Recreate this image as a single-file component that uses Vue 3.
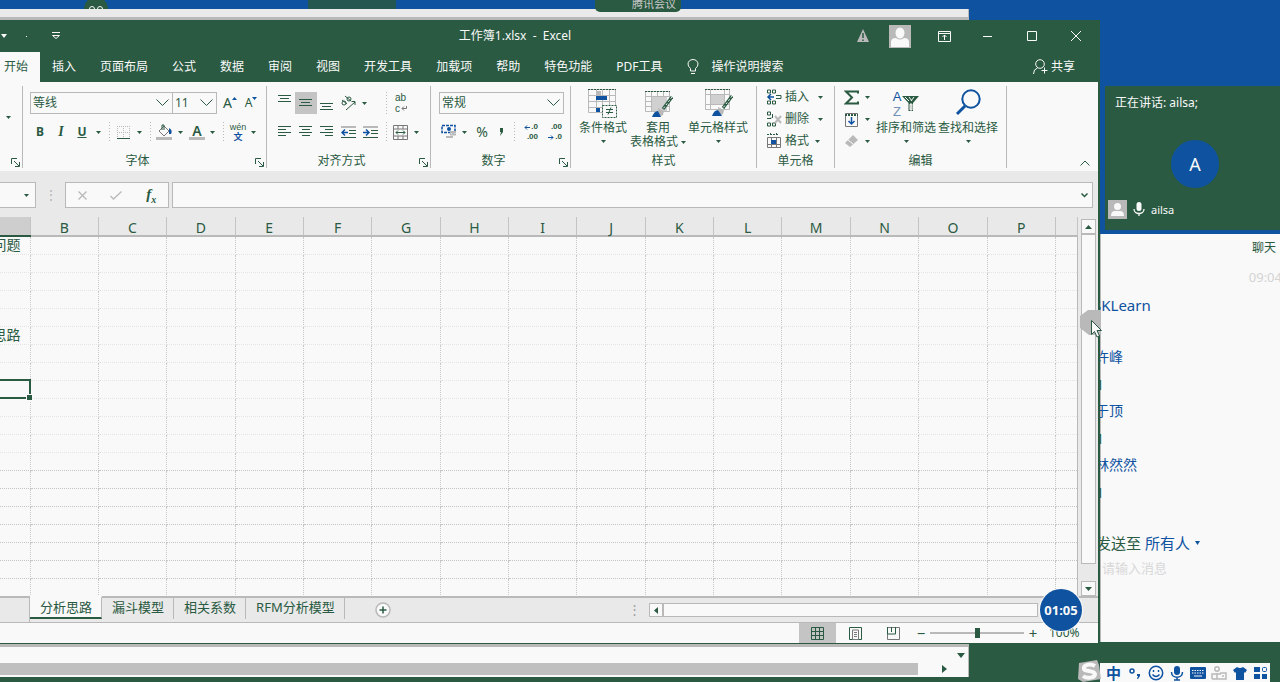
<script setup>
const tabs = ['开始', '插入', '页面布局', '公式', '数据', '审阅', '视图', '开发工具', '加载项', '帮助', '特色功能', 'PDF工具']
const columns = 'BCDEFGHIJKLMNOP'.split('')
const firstColumn = { 1: '主要问题', 6: '分析思路' }
const selectedRow = 9
const rowCount = 20
const sheets = ['分析思路', '漏斗模型', '相关系数', 'RFM分析模型']
const messages = [
  { name: 'SKLearn', text: '' },
  { name: '许峰', text: '1' },
  { name: '于顶', text: '1' },
  { name: '林然然', text: '1' }
]
</script>

<template>
  <div class="desktop">
    <div class="shade"></div>
    <div class="wall-dot"><i></i><i></i></div>
    <div class="meeting-tab">腾讯会议</div>

    <section class="back-window" aria-label="后台窗口">
      <div class="back-bottom">
        <div class="back-line"><svg width="8" height="5"><path d="M0 0h8L4 5z" fill="#2a5a42" /></svg></div>
        <div class="back-scroll">
          <div class="back-thumb"></div>
          <svg width="5" height="8"><path d="M0 0v8l5-4z" fill="#2a5a42" /></svg>
        </div>
      </div>
    </section>

    <footer class="taskbar">
      <div class="ime">
        <svg class="sogou" width="26" height="22" viewBox="0 0 26 22"><path d="M3 3L21 0l2 5 2 14-18 3-5-3z" fill="#b9b9b9" /><path d="M19 6C14 3 7 5 8 9c1 3 10 1 11 5 0 4-8 5-12 2" fill="none" stroke="#f9f9f9" stroke-width="4" /></svg>
        <button class="zh" aria-label="中文">中</button>
        <button aria-label="标点"><svg width="14" height="14"><circle cx="4" cy="5" r="2" fill="none" stroke="#0e52a0" stroke-width="1.5" /><path d="M9 8h3v2l-2 3H9l1-3H9z" fill="#0e52a0" /></svg></button>
        <button aria-label="表情"><svg width="16" height="16"><circle cx="8" cy="8" r="6.7" fill="none" stroke="#0e52a0" stroke-width="1.5" /><path d="M5.500 5v2M10.500 5v2M4.500 9.500q3.500 4 7 0" fill="none" stroke="#0e52a0" stroke-width="1.400" /></svg></button>
        <button aria-label="语音"><svg width="14" height="16"><rect x="4" y="1" width="6" height="9" rx="3" fill="#0e52a0" /><path d="M1.500 7c0 7 11 7 11 0M7 12v3M4 15h6" fill="none" stroke="#0e52a0" stroke-width="1.500" /></svg></button>
        <button aria-label="键盘"><svg width="16" height="12"><rect width="16" height="12" rx="1" fill="#0e52a0" /><path d="M2 3.500h12M2 6h12" stroke="#f9f9f9" stroke-dasharray="1.500 1" /><path d="M4 9h8" stroke="#f9f9f9" /></svg></button>
        <button aria-label="账户"><svg width="16" height="16" fill="none" stroke="#b9b9b9" stroke-width="1.500"><circle cx="6" cy="4" r="2.200" /><path d="M1 14V9h9M6 8v6M9 8h6v6H1M11 11h2" /></svg></button>
        <button aria-label="皮肤"><svg width="14" height="14"><path d="M4 1q3 2 6 0l4 3-2 3-1-1v8H3V6L2 7 0 4z" fill="#0e52a0" /></svg></button>
        <button aria-label="工具箱"><svg width="14" height="14"><path d="M0 1h6v5H0zM0 8h6v5H0zM8 8h5v5H8z" fill="#0e52a0" /><rect x="8.500" y="1.500" width="4" height="4" rx="1" fill="none" stroke="#0e52a0" /></svg></button>
      </div>
    </footer>

    <section class="speaker" aria-label="会议">
      <p>正在讲话: ailsa;</p>
      <div class="big-avatar">A</div>
      <div class="person">
        <svg width="19" height="19"><rect width="19" height="19" fill="#b9b9b9" /><circle cx="9.500" cy="6.500" r="3.500" fill="#f9f9f9" /><path d="M3 16q0-5 4-5h5q4 0 4 5z" fill="#f9f9f9" /></svg>
        <svg width="12" height="15"><rect x="3.500" y="0" width="5" height="9" rx="2.500" fill="#f9f9f9" /><path d="M1 7c0 6 10 6 10 0M6 11v3" fill="none" stroke="#f9f9f9" stroke-width="1.300" /></svg>
        <span>ailsa</span>
      </div>
    </section>

    <section class="chat" aria-label="聊天">
      <h2>聊天</h2>
      <time>09:04</time>
      <ul>
        <li v-for="m in messages" :key="m.name"><b>{{ m.name }}</b><span v-if="m.text">{{ m.text }}</span></li>
      </ul>
      <div class="send">
        <span>发送至</span>
        <button>所有人<svg width="5" height="4"><path d="M0 0h5L2.500 4z" fill="#0e52a0" /></svg></button>
      </div>
      <textarea aria-label="消息" placeholder="请输入消息"></textarea>
    </section>

    <main class="excel">
      <header class="titlebar">
        <div class="quick">
          <button aria-label="撤消选项"><svg width="6" height="4"><path d="M0 0h6L3 4z" fill="#f9f9f9" /></svg></button>
          <i></i>
          <button aria-label="自定义快速访问工具栏"><svg width="8" height="8"><path d="M0 .5h8" stroke="#f9f9f9" /><path d="M.5 3.500h7L4 6.500z" fill="none" stroke="#f9f9f9" /></svg></button>
        </div>
        <h1>工作簿1.xlsx&nbsp; -&nbsp; Excel</h1>
        <div class="controls">
          <button class="warn" aria-label="警告"><svg width="14" height="14"><path d="M7 0l6 13H1z" fill="#b9b9b9" /><path d="M7 4v5M7 10.500v1.500" stroke="#2a5a42" stroke-width="1.500" /></svg></button>
          <button aria-label="账户"><svg width="22" height="23"><rect width="22" height="23" fill="#b9b9b9" /><ellipse cx="11" cy="8" rx="4.500" ry="5.500" fill="#f9f9f9" /><path d="M2 22v-5q0-4 5-4 4 3 8 0 5 0 5 4v5z" fill="#f9f9f9" /></svg></button>
          <button aria-label="功能区显示选项"><svg width="13" height="11" fill="none" stroke="#f9f9f9"><path d="M.5.500h12v10H.5zM.5 2.500h12M6.500 9V4M4.500 6l2-2 2 2" /></svg></button>
          <button aria-label="最小化"><svg width="10" height="10"><path d="M0 5.500h9" stroke="#f9f9f9" /></svg></button>
          <button aria-label="最大化"><svg width="10" height="10"><path d="M.5.500h9v9h-9z" fill="none" stroke="#f9f9f9" /></svg></button>
          <button aria-label="关闭"><svg width="10" height="10"><path d="M0 0l10 10M10 0L0 10" stroke="#f9f9f9" /></svg></button>
        </div>
      </header>

      <nav class="tabs">
        <button v-for="(t, i) in tabs" :key="t" :class="{ on: i === 0 }">{{ t }}</button>
        <button class="tell"><svg width="12" height="16" fill="none" stroke="#f9f9f9"><path d="M3.500 12V9.500Q1 7.500 1 5a5 4.500 0 0 1 10 0q0 2.500-2.500 4.500V12zM4 14.500h4" /></svg>操作说明搜索</button>
        <button class="share"><svg width="15" height="16" fill="none" stroke="#f9f9f9"><circle cx="7" cy="5" r="4.300" /><path d="M.5 15q0-5 4-6M11.500 8.500v6M8.500 11.500h6" /></svg>共享</button>
      </nav>

      <div class="ribbon">
        <div class="group g-clip">
          <div class="body"><button class="tailcaret" aria-label="粘贴选项"><svg class="caret"><path d="M0 0h5L2.500 3z" /></svg></button></div>
          <div class="foot"><span></span><button class="launch" aria-label="剪贴板设置"><svg width="9" height="9"><path d="M.5 6V.5H6M3 3l5 5M8.500 4v4.500H4" /></svg></button></div>
        </div>

        <div class="group g-font">
          <div class="body rows">
            <div class="row first">
              <div class="pick font-name"><select aria-label="字体"><option>等线</option></select><svg width="13" height="8"><path d="M.5.500l6 6 6-6" /></svg></div>
              <div class="pick font-size"><select aria-label="字号"><option>11</option></select><svg width="13" height="8"><path d="M.5.500l6 6 6-6" /></svg></div>
              <button class="w22 grow" aria-label="增大字号">A<svg width="5" height="3"><path d="M0 3h5L2.500 0z" /></svg></button>
              <button class="w20 shrink" aria-label="减小字号">A<svg width="5" height="3"><path d="M0 0h5L2.500 3z" /></svg></button>
            </div>
            <div class="row">
              <button class="w20"><b>B</b></button><button class="w22"><em>I</em></button><button class="w20"><u>U</u></button>
              <button class="w12" aria-label="下划线选项"><svg class="caret"><path d="M0 0h5L2.500 3z" /></svg></button><i class="sep w10"></i>
              <button class="w18" aria-label="边框"><svg width="13" height="13"><path d="M.5 0v12M6.500 0v12M12.500 0v12M0 .5h13M0 6.500h13" stroke="#b9b9b9" stroke-dasharray="1 1" /><path d="M0 12.500h13" stroke="#2a5a42" /></svg></button>
              <button class="w14" aria-label="边框选项"><svg class="caret"><path d="M0 0h5L2.500 3z" /></svg></button><i class="sep w8"></i>
              <button class="w20" aria-label="填充颜色"><svg width="17" height="16"><path d="M3 7l5-5 5 5-5 5z" fill="#f9f9f9" stroke="#777" /><path d="M6 6V1h2v5" fill="none" stroke="#2a5a42" /><path d="M13 4q4 2 2 6h-2z" fill="#0e52a0" /><path d="M0 13h16v3H0z" fill="#b9b9b9" /></svg></button>
              <button class="w12" aria-label="填充选项"><svg class="caret"><path d="M0 0h5L2.500 3z" /></svg></button>
              <button class="w22 color-a" aria-label="字体颜色">A</button>
              <button class="w8" aria-label="颜色选项"><svg class="caret"><path d="M0 0h5L2.500 3z" /></svg></button><i class="sep w14"></i>
              <button class="w16 pinyin"><span>wén</span><span class="blue">文</span></button>
              <button class="w14" aria-label="拼音选项"><svg class="caret"><path d="M0 0h5L2.500 3z" /></svg></button>
            </div>
          </div>
          <div class="foot"><span>字体</span><button class="launch" aria-label="字体设置"><svg width="9" height="9"><path d="M.5 6V.5H6M3 3l5 5M8.500 4v4.500H4" /></svg></button></div>
        </div>

        <div class="group g-align">
          <div class="body rows">
            <div class="row first">
              <button class="w20" aria-label="顶端对齐"><svg class="ln" width="14" height="16"><path d="M0 .5h13M2 3.500h9M0 6.500h13" /></svg></button>
              <button class="w22 pressed" aria-label="垂直居中"><svg class="ln" width="14" height="16"><path d="M0 4.500h13M2 7.500h9M0 10.500h13" /></svg></button>
              <button class="w20" aria-label="底端对齐"><svg class="ln" width="14" height="16"><path d="M0 8.500h13M2 11.500h9M0 14.500h13" /></svg></button>
              <button class="w22" aria-label="方向"><svg class="ln" width="18" height="18"><circle cx="5" cy="9" r="2" /><path d="M3 6l5 4M6 2l6 5" /><circle cx="10" cy="5" r="2" /><path d="M7 16l9-8M12.500 7.500H16v3.500" /></svg></button>
              <button class="w10" aria-label="方向选项"><svg class="caret"><path d="M0 0h5L2.500 3z" /></svg></button>
              <i class="w12"></i><i class="sep w10"></i>
              <button class="w18 wrap" aria-label="自动换行"><span>ab</span><span>c<svg width="6" height="5"><path d="M5.500 0v2.500H1M3 .5l-2 2 2 2" fill="none" stroke="#777" /></svg></span></button>
            </div>
            <div class="row">
              <button class="w20" aria-label="左对齐"><svg class="ln" width="14" height="12"><path d="M0 .5h13M0 3.500h8M0 6.500h13M0 9.500h8" /></svg></button>
              <button class="w22" aria-label="居中"><svg class="ln" width="14" height="12"><path d="M0 .5h13M3 3.500h8M0 6.500h13M3 9.500h8" /></svg></button>
              <button class="w20" aria-label="右对齐"><svg class="ln" width="14" height="12"><path d="M0 .5h13M5 3.500h8M0 6.500h13M5 9.500h8" /></svg></button>
              <button class="w24" aria-label="减少缩进"><svg class="ln" width="16" height="13"><path d="M0 1h15" stroke="#b9b9b9" stroke-width="2" /><path d="M8 4.500h7M8 7.500h7M0 11.500h15" /><path d="M7 6.500H1M4 3.500l-3 3 3 3" stroke="#0e52a0" stroke-width="1.500" /></svg></button>
              <button class="w20" aria-label="增加缩进"><svg class="ln" width="16" height="13"><path d="M0 1h15" stroke="#b9b9b9" stroke-width="2" /><path d="M8 4.500h7M8 7.500h7M0 11.500h15" /><path d="M0 6.500h6M3 3.500l3 3-3 3" stroke="#0e52a0" stroke-width="1.500" /></svg></button>
              <i class="sep w10"></i>
              <button class="w18" aria-label="合并后居中"><svg class="ln" width="15" height="15"><path d="M.5.500h14v14H.5zM.5 4h14M.5 11h14M5 .5V4M10 .5V4M5 11v3.500M10 11v3.500" stroke="#777" /><path d="M3 7.500h9M5 5.500l-2 2 2 2M10 5.500l2 2-2 2" /></svg></button>
              <button class="w14" aria-label="合并选项"><svg class="caret"><path d="M0 0h5L2.500 3z" /></svg></button>
            </div>
          </div>
          <div class="foot"><span>对齐方式</span><button class="launch" aria-label="对齐设置"><svg width="9" height="9"><path d="M.5 6V.5H6M3 3l5 5M8.500 4v4.500H4" /></svg></button></div>
        </div>

        <div class="group g-num">
          <div class="body rows">
            <div class="row first"><div class="pick num-format"><select aria-label="数字格式"><option>常规</option></select><svg width="13" height="8"><path d="M.5.500l6 6 6-6" /></svg></div></div>
            <div class="row">
              <button class="w20" aria-label="会计数字格式"><svg width="16" height="16"><path d="M1 1.500h13v7H1z" fill="none" stroke="#0e52a0" stroke-width="1.500" stroke-dasharray="3 1" /><circle cx="8" cy="5" r="2" fill="#0e52a0" /><path d="M9 8h6M9 10.500h6M5 13h7" stroke="#b9b9b9" stroke-width="2" /></svg></button>
              <button class="w10" aria-label="货币选项"><svg class="caret"><path d="M0 0h5L2.500 3z" /></svg></button>
              <button class="w26 pct">%</button><button class="w12 comma" aria-label="千位分隔"><svg width="5" height="8"><path d="M1 0h3v4L1 8l1-4H1z" fill="#2a5a42" /></svg></button><i class="sep w14"></i>
              <button class="w20 dec" aria-label="增加小数位数"><span><svg width="6" height="5"><path d="M6 2.500H1M3 .5l-2 2 2 2" /></svg>.0</span><span>.00</span></button>
              <button class="w24 dec" aria-label="减少小数位数"><span>.00</span><span><svg width="6" height="5"><path d="M0 2.500h5M3 .5l2 2-2 2" /></svg>.0</span></button>
            </div>
          </div>
          <div class="foot"><span>数字</span><button class="launch" aria-label="数字设置"><svg width="9" height="9"><path d="M.5 6V.5H6M3 3l5 5M8.500 4v4.500H4" /></svg></button></div>
        </div>

        <div class="group g-style">
          <div class="body bigs">
            <button class="big w54"><svg width="30" height="30"><path d="M.5.500h27v23H.5zM.5 6.500h27M.5 12.500h27M.5 18.500h27M8.500.500v23M14.500.500v23M21.500.500v23" fill="none" stroke="#b9b9b9" /><path d="M0 .5h28" stroke="#2a5a42" stroke-dasharray="2 1" /><path d="M8 2h5v4H8z" fill="#b9b9b9" /><path d="M8 7h11v4H8zM8 19h4v4H8z" fill="#0e52a0" /><rect x="14.500" y="16.500" width="14" height="12" fill="#f9f9f9" stroke="#2a5a42" stroke-dasharray="2 1" /><path d="M18 20.500h7M18 23.500h7M23 18.500l-3 7" stroke="#2a5a42" /></svg><span>条件格式</span><svg class="caret"><path d="M0 0h5L2.500 3z" /></svg></button>
            <button class="big w56"><svg width="30" height="30"><path d="M2.500 2.500h24v20h-24zM2.500 7.500h24M2.500 12.500h24M2.500 17.500h24M8.500 2.500v20M14.500 2.500v20M20.500 2.500v20" fill="#f9f9f9" stroke="#b9b9b9" /><path d="M9 8h15v14H9z" fill="#d0d0d0" /><path d="M2 2.500h25" stroke="#2a5a42" stroke-dasharray="2 1" /><path d="M29 8l-9 12" stroke="#2a5a42" stroke-width="3" /><path d="M29 8l-9 12" stroke="#f9f9f9" stroke-dasharray="2 2" /><path d="M15 19l6 3-1 4-4 2z" fill="#b9b9b9" /><path d="M9 28q2-6 6-6l3 6z" fill="#0e52a0" /></svg><span>套用</span><span class="line2">表格格式<svg class="caret"><path d="M0 0h5L2.500 3z" /></svg></span></button>
            <button class="big w64"><svg width="30" height="30"><path d="M2.500.500h24v20h-24zM2.500 5.500h24M2.500 15.500h24M7.500.500v20M21.500.500v20" fill="#f9f9f9" stroke="#b9b9b9" /><path d="M8 6h13v9H8z" fill="#d0d0d0" /><path d="M2 .5h25" stroke="#2a5a42" stroke-dasharray="2 1" /><path d="M29 7l-9 12" stroke="#2a5a42" stroke-width="3" /><path d="M29 7l-9 12" stroke="#f9f9f9" stroke-dasharray="2 2" /><path d="M15 18l6 3-1 4-4 2z" fill="#b9b9b9" /><path d="M9 27q2-6 6-6l4 6z" fill="#0e52a0" /></svg><span>单元格样式</span><svg class="caret"><path d="M0 0h5L2.500 3z" /></svg></button>
          </div>
          <div class="foot"><span>样式</span></div>
        </div>

        <div class="group g-cell">
          <div class="body list">
            <button><svg width="16" height="16" fill="none" stroke="#2a5a42"><path d="M1.500 1v3h3V1zM6.500 1v3h3V1zM1.500 12v3h3v-3zM6.500 12v3h3v-3zM10 6.500h5v3h-5" /><path d="M8 8H2M5 5L2 8l3 3" stroke="#0e52a0" stroke-width="1.500" /></svg>插入<svg class="caret wide"><path d="M0 0h5L2.500 3z" /></svg></button>
            <button><svg width="16" height="16" fill="none" stroke="#2a5a42"><path d="M1.500 1v3h3V1zM1.500 12v3h3v-3zM6.500 12v3h3v-3zM1 7.500h4v-1M6.500 3v4" /><path d="M9 5l6 7M15 5l-6 7" stroke="#b9b9b9" stroke-width="2" /></svg>删除<svg class="caret wide"><path d="M0 0h5L2.500 3z" /></svg></button>
            <button><svg width="16" height="16" fill="none" stroke="#2a5a42"><path d="M1 1.500h12M4.500 0v3M10.500 0v3" stroke-dasharray="2 1" /><path d="M1.500 4.500h13v10h-13zM1.500 11.500h13M5.500 5v9M10.500 5v9" stroke="#777" /><path d="M5 7h5v4H5z" fill="#0e52a0" stroke="none" /></svg>格式<svg class="caret"><path d="M0 0h5L2.500 3z" /></svg></button>
          </div>
          <div class="foot"><span>单元格</span></div>
        </div>

        <div class="group g-edit">
          <div class="body edit">
            <div class="list">
              <button aria-label="自动求和"><svg width="15" height="15"><path d="M14 3.500V1.500H2L8 7.500 2 13.500h12v-2" fill="none" stroke="#2a5a42" stroke-width="2" /></svg><svg class="caret"><path d="M0 0h5L2.500 3z" /></svg></button>
              <button aria-label="填充"><svg width="15" height="15"><path d="M1.500 1.500h12v13h-12z" fill="none" stroke="#777" /><path d="M1 3h13" stroke="#2a5a42" stroke-width="2" stroke-dasharray="2 1" /><path d="M7.500 5v7M4.500 9l3 3 3-3" fill="none" stroke="#0e52a0" stroke-width="1.500" /></svg><svg class="caret"><path d="M0 0h5L2.500 3z" /></svg></button>
              <button aria-label="清除"><svg width="15" height="15"><path d="M1 9l8-8 5 5-8 7z" fill="#b9b9b9" /><path d="M4 6l5 4" stroke="#f9f9f9" /></svg><svg class="caret"><path d="M0 0h5L2.500 3z" /></svg></button>
            </div>
            <button class="big w60"><span class="az"><span class="letters"><span>A</span><span>Z</span></span><svg width="17" height="16"><path d="M0 0h17l-6 7v8H6.500V7z" fill="#2a5a42" /><path d="M8 8h2v6H8zM3 1l4 4M7 1l3 4M12 1l-3 4" stroke="#f9f9f9" fill="#b9b9b9" /></svg></span><span>排序和筛选</span><svg class="caret"><path d="M0 0h5L2.500 3z" /></svg></button>
            <button class="big w64"><svg width="28" height="30"><circle cx="17" cy="10" r="8.700" fill="none" stroke="#0e52a0" stroke-width="2" /><path d="M11 17l-8 8" stroke="#0e52a0" stroke-width="3" /></svg><span>查找和选择</span><svg class="caret"><path d="M0 0h5L2.500 3z" /></svg></button>
          </div>
          <div class="foot"><span>编辑</span></div>
        </div>
        <button class="collapse" aria-label="折叠功能区"><svg width="10" height="6"><path d="M.5 5.500l4.500-4.500 4.500 4.500" fill="none" stroke="#2a5a42" /></svg></button>
      </div>

      <div class="formula">
        <div class="namebox"><input aria-label="名称框"><svg class="caret"><path d="M0 0h5L2.500 3z" /></svg></div>
        <span class="grip">⋮</span>
        <div class="fx">
          <button aria-label="取消"><svg width="9" height="9"><path d="M.5.500l8 8M8.500.500l-8 8" stroke="#b9b9b9" stroke-width="1.300" /></svg></button>
          <button aria-label="输入"><svg width="12" height="9"><path d="M.5 5l3 3 8-7.500" fill="none" stroke="#b9b9b9" stroke-width="1.300" /></svg></button>
          <button class="fn"><em>f<sub>x</sub></em></button>
        </div>
        <div class="fbox"><input aria-label="编辑栏"><svg width="7" height="5"><path d="M.5.500l3 3 3-3" fill="none" stroke="#2a5a42" stroke-width="1.500" /></svg></div>
      </div>

      <div class="sheet">
        <table>
          <colgroup><col class="c-a"><col v-for="c in columns" :key="c"><col class="c-end"></colgroup>
          <thead><tr><th class="sel" aria-label="A"></th><th v-for="c in columns" :key="c">{{ c }}</th><th aria-label="Q"></th></tr></thead>
          <tbody>
            <tr v-for="r in rowCount" :key="r" :class="{ strong: r > 12 }">
              <td :class="{ active: r === selectedRow }"><div v-if="firstColumn[r]">{{ firstColumn[r] }}</div></td>
              <td v-for="c in columns" :key="c"></td><td></td>
            </tr>
          </tbody>
        </table>
        <div class="vscroll">
          <button aria-label="向上滚动"><svg width="7" height="4"><path d="M0 4h7L3.500 0z" fill="#2a5a42" /></svg></button>
          <div class="thumb"></div>
          <button aria-label="向下滚动"><svg width="7" height="4"><path d="M0 0h7L3.500 4z" fill="#2a5a42" /></svg></button>
        </div>
      </div>

      <div class="sheetbar">
        <div class="lead"></div>
        <button v-for="(s, i) in sheets" :key="s" :class="{ on: i === 0 }">{{ s }}</button>
        <button class="add" aria-label="新工作表"><svg width="16" height="16"><circle cx="8" cy="8" r="7" fill="#f9f9f9" stroke="#b9b9b9" stroke-width="1.500" /><path d="M8 4.500v7M4.500 8h7" stroke="#2a5a42" stroke-width="1.500" /></svg></button>
        <span class="dots">⋮</span>
        <div class="hscroll"><button aria-label="向左滚动"><svg width="4" height="7"><path d="M4 0v7L0 3.500z" fill="#2a5a42" /></svg></button><div></div></div>
      </div>

      <div class="status">
        <button class="on" aria-label="普通"><svg width="13" height="13"><path d="M.5.500h12v12H.5zM.5 4.500h12M.5 8.500h12M4.500.500v12M8.500.500v12" fill="none" stroke="#2a5a42" /></svg></button>
        <button aria-label="页面布局"><svg width="13" height="13"><path d="M.5.500h12v12H.5z" fill="none" stroke="#2a5a42" /><path d="M3.500 3h6v9.500h-6z" fill="#f9f9f9" stroke="#777" /><path d="M5 5.500h3M5 7.500h3M5 9.500h3" stroke="#777" /></svg></button>
        <button aria-label="分页预览"><svg width="13" height="13"><path d="M.5.500h12v12H.5z" fill="none" stroke="#777" /><path d="M.5 0v7h8V0M4.500 0v5" fill="none" stroke="#2a5a42" /></svg></button>
        <button class="zoom" aria-label="缩小">−</button>
        <input type="range" min="0" max="100" value="50" aria-label="缩放">
        <button class="zoom" aria-label="放大">+</button>
        <span>100%</span>
      </div>
    </main>

    <svg class="pointer" width="22" height="30"><path d="M0 7L8 1l12 0v25H9L0 19z" fill="#b9b9b9" /><path d="M11.500 11.500v14l3-3 2.500 5.500 2.500-1-2.500-5.500h4.500z" fill="#f9f9f9" stroke="#2a5a42" /></svg>
    <div class="timer">01:05</div>
  </div>
</template>

<style>
html, body { margin: 0; }
</style>

<style scoped>
.desktop { position: relative; height: 100vh; min-height: 600px; overflow: hidden; background: #0e52a0; color: #2a5a42; font-family: "Noto Sans", "Noto Sans CJK SC", sans-serif; font-size: 12px; line-height: 14px; }
.desktop *, .desktop *::before { box-sizing: border-box; }
button { border: 0; background: none; padding: 0; margin: 0; font: inherit; color: inherit; display: flex; align-items: center; justify-content: center; flex: none; }
input, select, textarea { font: inherit; color: inherit; border: 0; background: none; margin: 0; padding: 0; min-width: 0; outline: 0; }
svg { display: block; flex: none; }
h1, h2, p, ul { margin: 0; padding: 0; font-weight: 400; font-size: 12px; list-style: none; }

.shade { position: absolute; top: 0; left: 308px; width: 88px; height: 9px; background: #23574f; }
.wall-dot { position: absolute; left: 84px; top: -3px; width: 24px; height: 24px; border-radius: 12px; background: #2a5a42; display: flex; gap: 2px; justify-content: center; padding-top: 9px; }
.wall-dot i { width: 6px; height: 6px; border-radius: 3px; border: 1px solid #f9f9f9; }
.back-window { position: absolute; z-index: 1; left: 0; right: 311px; top: 9px; bottom: 5px; background: linear-gradient(#eaeaea 8px, #b9b9b9 8px); border-right: 1px solid #b9b9b9; display: flex; flex-direction: column; justify-content: flex-end; }
.back-bottom { background: #f9f9f9; height: 30px; }
.back-line { height: 16px; display: flex; justify-content: flex-end; align-items: center; padding: 0 3px 0 0; }
.back-scroll { height: 12px; display: flex; align-items: center; gap: 24px; }
.back-scroll svg { margin-right: 21px; }
.back-thumb { flex: 1; height: 12px; background: #bfbfbf; }
.meeting-tab { position: absolute; z-index: 2; left: 595px; top: 0; width: 86px; height: 12px; padding-left: 37px; background: #2a5a42; color: #c8c8c8; line-height: 8px; font-size: 11px; border-radius: 0 0 5px 5px; white-space: nowrap; }

.taskbar { position: absolute; left: 0; right: 0; bottom: 0; height: 40px; background: #2a5a42; display: flex; justify-content: flex-end; align-items: flex-end; padding-right: 10px; z-index: 0; }
.ime { height: 19px; width: 170px; background: #f9f9f9; display: flex; align-items: center; padding-left: 3px; position: relative; color: #0e52a0; }
.ime button { width: 21px; }
.zh { font-size: 15px; font-weight: 700; }
.sogou { position: absolute; left: -24px; bottom: 0; }

.speaker { position: absolute; z-index: 1; left: calc(100% - 175px); right: 0; top: 86px; height: 144px; background: #2a5a42; color: #f9f9f9; display: flex; flex-direction: column; align-items: center; padding: 10px 0 0 3px; }
.speaker p { align-self: flex-start; padding-left: 7px; font-size: 12px; }
.big-avatar { width: 48px; height: 48px; border-radius: 24px; background: #0e52a0; display: flex; align-items: center; justify-content: center; font-size: 18px; margin: 30px 0 0 2px; }
.person { align-self: flex-start; display: flex; align-items: center; gap: 6px; margin-top: 12px; font-size: 11px; }

.chat { position: absolute; z-index: 1; right: 0; width: 190px; top: 234px; bottom: 40px; background: linear-gradient(to right, #b9b9b9 11px, #f9f9f9 11px); padding: 7px 0 0 5px; overflow: hidden; }
.chat h2 { text-align: right; padding-right: 4px; }
.chat time { display: block; text-align: right; color: #d4d4d4; font-size: 13px; margin: 15px -2px 0 0; }
.chat ul { margin-top: 12px; color: #0e52a0; font-size: 14px; }
.chat li { height: 54px; line-height: 18px; }
.chat li:first-child { height: 52px; font-size: 15px; }
.chat li:first-child b { margin-left: -2px; }
.chat li b { display: block; font-weight: 400; height: 20px; }
.chat li span { display: block; padding: 9px 0 0 1px; font-size: 14px; line-height: 16px; color: #2a5a42; }
.send { display: flex; gap: 4px; font-size: 15px; line-height: 20px; margin-top: 23px; padding-left: 1px; }
.send button { color: #0e52a0; gap: 5px; }
.chat textarea { display: block; width: 100%; resize: none; font-size: 13px; margin-top: 6px; height: 50px; line-height: 18px; padding-left: 7px; }
.chat textarea::placeholder { color: #d8d8d8; opacity: 1; }

.excel { position: absolute; z-index: 3; left: 0; right: 180px; top: 20px; bottom: 38px; background: #e9e9e9; border-right: 2px solid #2a5a42; border-bottom: 1px solid #2a5a42; display: flex; flex-direction: column; }
.titlebar { height: 32px; background: #2a5a42; color: #f9f9f9; display: flex; align-items: center; flex: none; }
.quick { width: 182px; display: flex; align-items: center; padding-left: 1px; }
.quick i { width: 1px; height: 1px; background: #f9f9f9; margin: 0 25px 0 19px; }
.titlebar h1 { flex: 1; text-align: center; }
.controls { display: flex; align-items: center; }
.controls button { width: 44px; height: 30px; }
.controls .warn { width: 30px; }
.tabs { display: flex; background: #2a5a42; color: #f9f9f9; height: 30px; flex: none; }
.tabs button { padding: 0 12px; white-space: nowrap; }
.tabs .on { background: #f9f9f9; color: #2a5a42; padding: 0 12px 0 4px; }
.tabs .tell { gap: 12px; padding-left: 13px; }
.tabs .share { margin-left: auto; gap: 3px; padding-right: 23px; }

.ribbon { display: flex; background: #f9f9f9; height: 89px; padding: 4px 0 3px; flex: none; }
.group { border-right: 1px solid #b9b9b9; display: flex; flex-direction: column; flex: none; white-space: nowrap; }
.g-clip { width: 23px; } .g-font { width: 244px; } .g-align { width: 164px; } .g-num { width: 140px; }
.g-style { width: 186px; } .g-cell { width: 78px; } .g-edit { width: 172px; }
.body { height: 66px; }
.foot { height: 16px; display: flex; align-items: center; padding-top: 2px; }
.foot span { flex: 1; text-align: center; }
.launch { width: 14px; padding-top: 2px; }
.launch svg { fill: none; stroke: #2a5a42; }
.tailcaret { height: 62px; width: 16px; }
.caret { width: 5px; height: 3px; fill: #2a5a42; }
.rows { padding: 6px 0 0 7px; }
.g-align .rows, .g-num .rows { padding-left: 8px; }
.row { display: flex; height: 20px; align-items: center; }
.row.first { height: 22px; margin-bottom: 8px; }
.row > button, .row > i { height: 100%; }
.row i { display: block; flex: none; }
.w8 { width: 8px; } .w10 { width: 10px; } .w12 { width: 12px; } .w14 { width: 14px; } .w16 { width: 16px; } .w18 { width: 18px; }
.w20 { width: 20px; } .w22 { width: 22px; } .w24 { width: 24px; } .w26 { width: 26px; } .w54 { width: 54px; } .w56 { width: 56px; } .w60 { width: 60px; } .w64 { width: 64px; }
.sep { background: repeating-linear-gradient(#b9b9b9 0 1px, #f9f9f9 1px 3px) center / 1px 100% no-repeat; }
.pick { display: flex; align-items: center; height: 22px; border: 1px solid #b9b9b9; background: #f9f9f9; padding-right: 3px; }
.pick select { appearance: none; flex: 1; padding-left: 2px; height: 20px; border-radius: 0; }
.pick svg { fill: none; stroke: #2a5a42; pointer-events: none; }
.font-name { width: 143px; }
.font-size { width: 45px; margin-left: -1px; }
.num-format { width: 125px; }
.grow, .shrink { align-items: center; font-size: 14px; }
.grow { margin-left: 2px; }
.shrink { font-size: 12px; }
.grow svg, .shrink svg { fill: #0e52a0; margin-bottom: 10px; }
.row b, .row u { font-weight: 700; font-size: 12px; }
.row em { font-family: "Liberation Serif", serif; font-weight: 700; font-size: 14px; }
.row > .color-a { border-bottom: 3px solid #b9b9b9; font-size: 14px; font-weight: 600; height: 16px; width: 16px; margin: 0 3px; }
.pinyin { flex-direction: column; font-family: "Liberation Sans", "Noto Sans CJK SC", sans-serif; font-size: 9px; line-height: 10px; }
.blue { color: #0e52a0; font-weight: 700; height: 12px; }
.ln { fill: none; stroke: #2a5a42; }
.pressed { background: #c4c4c4; }
.wrap { flex-direction: column; font-family: "Liberation Sans", sans-serif; line-height: 11px; font-size: 10px; align-items: flex-start; padding-left: 4px; }
.wrap span { display: flex; align-items: center; gap: 1px; }
.pct { font-size: 14px; }
.dec { flex-direction: column; font-family: "Liberation Sans", sans-serif; font-size: 8px; line-height: 10px; font-weight: 700; align-items: flex-end; padding-right: 3px; }
.dec span { display: flex; align-items: center; gap: 1px; }
.dec svg { fill: none; stroke: #0e52a0; }
.bigs { display: flex; padding-left: 5px; }
.big { flex-direction: column; align-items: center; justify-content: flex-start; padding-top: 3px; }
.big > span { line-height: 14px; }
.big > svg:first-child, .az { margin-bottom: 2px; }
.big > .caret { margin-top: 5px; }
.line2 { display: flex; align-items: center; gap: 3px; }
.list { display: flex; flex-direction: column; align-items: flex-start; }
.list button { height: 22px; }
.g-cell .list { padding-left: 9px; }
.g-cell .list button { gap: 3px; }
.g-cell .caret { margin-left: 3px; }
.g-cell .caret.wide { margin-left: 6px; }
.edit { display: flex; }
.edit .list { padding-left: 9px; width: 41px; }
.edit .list button { gap: 6px; }
.az { display: flex; height: 30px; align-items: center; gap: 1px; color: #0e52a0; }
.letters { display: flex; flex-direction: column; font: 13px/15px "Liberation Sans", sans-serif; }
.letters span:last-child { color: #6f8fb5; }
.collapse { margin: auto 8px 0 auto; height: 10px; }

.formula { display: flex; padding: 11px 5px 9px 0; height: 46px; flex: none; }
.namebox, .fx, .fbox { background: #f9f9f9; border: 1px solid #b9b9b9; display: flex; align-items: center; }
.namebox { width: 36px; border-left: 0; padding-right: 6px; }
.grip { width: 29px; text-align: center; color: #b0b0b0; line-height: 26px; }
.namebox input, .fbox input { flex: 1; width: 0; height: 20px; }
.fx { width: 104px; justify-content: space-around; margin-right: 3px; }
.fn em { font: italic 700 15px "Liberation Serif", serif; }
.fn sub { font-size: 10px; line-height: 8px; }
.fbox { flex: 1; padding-right: 4px; }

.sheet { display: flex; flex: 1; min-height: 0; overflow: hidden; }
table { flex: 1; width: 0; border-collapse: collapse; table-layout: fixed; background: #f9f9f9; border-right: 1px solid #b9b9b9; align-self: flex-start; }
.c-a { width: 30px; } .c-end { width: 22px; }
thead tr { height: 19px; background: #e9e9e9; }
th { height: 19px; padding: 2px 0 0; font-weight: 400; font-size: 14px; line-height: 15px; border-right: 1px solid #c4c4c4; border-bottom: 2px solid #b9b9b9; }
th.sel { background: #cecece; border-bottom-color: #2a5a42; }
td { height: 18px; padding: 0; border-right: 1px dotted #c8c8c8; border-bottom: 1px dotted #e4e4e4; line-height: 16px; }
.strong td { border-bottom-color: #c4c4c4; }
td div { display: flex; justify-content: flex-end; overflow: hidden; white-space: nowrap; font-size: 14px; height: 16px; padding-right: 9px; }
td.active { position: relative; }
td.active::before { content: ""; position: absolute; inset: -2px -1px -1px -2px; border: 2px solid #2a5a42; }
td.active::after { content: ""; position: absolute; right: -3px; bottom: -3px; width: 5px; height: 5px; background: #2a5a42; border: 1px solid #f9f9f9; box-sizing: content-box; }
.vscroll { width: 20px; display: flex; flex-direction: column; align-items: center; padding: 2px 0 0; }
.vscroll button { width: 15px; height: 15px; background: #f9f9f9; border: 1px solid #b9b9b9; }
.vscroll .thumb { width: 15px; flex: 1; background: #f9f9f9; border: 1px solid #b9b9b9; margin-bottom: 17px; }

.sheetbar { display: flex; height: 27px; flex: none; border-bottom: 1px solid #b9b9b9; font-size: 13px; align-items: stretch; }
.lead { width: 30px; border-top: 2px solid #b9b9b9; border-right: 1px solid #b9b9b9; }
.sheetbar > button { border-top: 2px solid #b9b9b9; padding: 0 9px 3px 10px; border-right: 1px solid #b9b9b9; margin-bottom: 3px; }
.sheetbar > .on { background: #f9f9f9; border-top-color: #f9f9f9; border-bottom: 2px solid #2a5a42; padding-bottom: 1px; }
.sheetbar > .add { border-right: 0; margin-bottom: 0; padding: 0 0 0 30px; flex: 1; justify-content: flex-start; }
.dots { border-top: 2px solid #b9b9b9; color: #a0a0a0; width: 21px; line-height: 22px; }
.hscroll { border-top: 2px solid #b9b9b9; flex: 0 0 449px; display: flex; padding: 5px 60px 5px 0; }
.hscroll button { width: 14px; background: #f9f9f9; border: 1px solid #b9b9b9; }
.hscroll div { flex: 1; background: #f9f9f9; border: 1px solid #b9b9b9; }

.status { height: 20px; flex: none; background: #f9f9f9; display: flex; justify-content: flex-end; align-items: center; padding-right: 18px; }
.status button { width: 38px; height: 20px; }
.status .on { background: #c4c4c4; width: 37px; }
.status .zoom { width: 18px; font-size: 15px; }
.status input { appearance: none; width: 94px; height: 12px; background: linear-gradient(#b9b9b9, #b9b9b9) center / 100% 2px no-repeat; }
.status input::-webkit-slider-thumb { appearance: none; width: 5px; height: 10px; background: #2a5a42; }
.status span { width: 31px; margin-left: 7px; }

.pointer { position: absolute; z-index: 4; left: calc(100% - 200px); top: 309px; }
.timer { position: absolute; z-index: 4; right: 198px; bottom: 51px; width: 42px; height: 42px; border-radius: 21px; background: #0e52a0; color: #f9f9f9; display: flex; align-items: center; justify-content: center; font-size: 13px; font-weight: 700; box-shadow: 0 0 0 1px #f9f9f9; }
</style>
